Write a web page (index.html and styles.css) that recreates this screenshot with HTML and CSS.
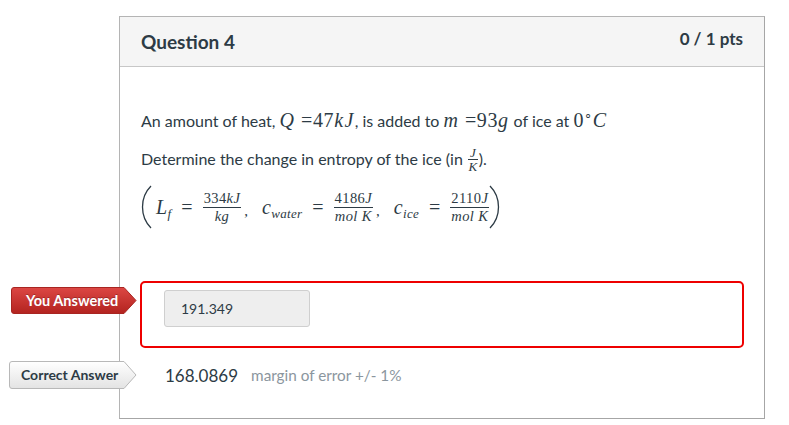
FILE: index.html
```html
<!DOCTYPE html>
<html>
<head>
<meta charset="utf-8">
<link rel="stylesheet" href="styles.css">
</head>
<body>
<div class="card">
  <div class="card-header">
    <div class="q-title">Question 4</div>
    <div class="q-pts">0 / 1 pts</div>
  </div>
  <div class="card-body">
    <p class="line l1">An amount of heat, <span class="m"><i>Q</i> <span class="rm">=47</span><i>kJ</i></span>, is added to <span class="m"><i>m</i> <span class="rm">=93</span><i>g</i></span> of ice at <span class="m"> <span class="rm">0</span><sup class="deg">∘</sup><i>C</i></span></p>
    <p class="line l2">Determine the change in entropy of the ice (in <span class="sfrac"><span class="num"><i>J</i></span><span class="den"><i>K</i></span></span>).</p>
    <div class="eq">
      <svg class="paren" width="11" height="44" viewBox="0 0 11 44"><path d="M10 1 C3 8 1.5 15 1.5 22 C1.5 29 3 36 10 43" fill="none" stroke="#2d3b45" stroke-width="1.3"/></svg>
      <span class="sym"><i>L</i><sub><i>f</i></sub></span>
      <span class="eqs">=</span>
      <span class="frac"><span class="num">334<i>kJ</i></span><span class="den"><i>kg</i></span></span>
      <span class="comma">,</span>
      <span class="sym c1"><i>c</i><sub><i>water</i></sub></span>
      <span class="eqs">=</span>
      <span class="frac"><span class="num">4186<i>J</i></span><span class="den"><i>mol</i>&nbsp;<i>K</i></span></span>
      <span class="comma">,</span>
      <span class="sym c2"><i>c</i><sub><i>ice</i></sub></span>
      <span class="eqs">=</span>
      <span class="frac"><span class="num">2110<i>J</i></span><span class="den"><i>mol</i>&nbsp;<i>K</i></span></span>
      <svg class="paren" width="11" height="44" viewBox="0 0 11 44"><path d="M1 1 C8 8 9.5 15 9.5 22 C9.5 29 8 36 1 43" fill="none" stroke="#2d3b45" stroke-width="1.3"/></svg>
    </div>
  </div>
  <div class="answer-row you">
    <div class="badge red">
      <svg class="badge-bg" width="126" height="27" viewBox="0 0 126 27">
        <defs><linearGradient id="rg" x1="0" y1="0" x2="0" y2="1"><stop offset="0" stop-color="#dc4744"/><stop offset="1" stop-color="#b3231f"/></linearGradient></defs>
        <path d="M3 0.5 H113 L125 13.5 L113 26.5 H3 Q0.5 26.5 0.5 24 V3 Q0.5 0.5 3 0.5 Z" fill="url(#rg)" stroke="#a82521" stroke-width="1"/>
      </svg>
      <span class="badge-text">You Answered</span>
    </div>
    <div class="answer-box">
      <div class="answer-input">191.349</div>
    </div>
  </div>
  <div class="answer-row correct">
    <div class="badge gray">
      <svg class="badge-bg" width="128" height="28" viewBox="0 0 128 28">
        <defs><linearGradient id="gg" x1="0" y1="0" x2="0" y2="1"><stop offset="0" stop-color="#ffffff"/><stop offset="1" stop-color="#e3e3e3"/></linearGradient></defs>
        <path d="M3 0.5 H115 L127 14 L115 27.5 H3 Q0.5 27.5 0.5 25 V3 Q0.5 0.5 3 0.5 Z" fill="url(#gg)" stroke="#b8b8b8" stroke-width="1"/>
      </svg>
      <span class="badge-text">Correct Answer</span>
    </div>
    <div class="correct-val">168.0869</div>
    <div class="margin">margin of error +/- 1%</div>
  </div>
</div>
</body>
</html>
```

FILE: styles.css
```css
html, body {
  margin: 0;
  padding: 0;
  background: #fff;
}
body {
  font-family: Lato, "Open Sans", sans-serif;
  color: #2d3b45;
}
.card {
  margin: 16px 0 0 119px;
  width: 646px;
  height: 403px;
  box-sizing: border-box;
  border: 1px solid #b4b4b4;
  border-bottom-color: #a6a6a6;
  border-right-color: #a6a6a6;
}
.card-header {
  height: 50px;
  box-sizing: border-box;
  background: #f5f5f5;
  border-bottom: 1px solid #c7c7c7;
  display: flex;
  justify-content: space-between;
  padding: 0 21px 0 21px;
}
.q-title {
  font-weight: 700;
  font-size: 19px;
  line-height: 20px;
  margin-top: 15px;
}
.q-pts {
  font-weight: 700;
  font-size: 17px;
  line-height: 18px;
  margin-top: 13px;
}
.card-body {
  padding: 42px 21px 0 21px;
  height: 165px;
  box-sizing: border-box;
}
.line {
  margin: 0;
  font-size: 16px;
}
.l1 {
  line-height: 22px;
}
.l2 {
  margin-top: 16px;
  line-height: 22px;
}
.m {
  font-family: "Liberation Serif", serif;
  font-size: 20px;
  letter-spacing: 0.6px;
}
.m i {
  font-style: italic;
  letter-spacing: 1.4px;
}
.rm {
  font-style: normal;
}
.deg {
  font-size: 13px;
  vertical-align: 8px;
  line-height: 0;
}
.sfrac {
  display: inline-flex;
  flex-direction: column;
  align-items: center;
  vertical-align: middle;
  font-family: "Liberation Serif", serif;
  font-size: 13px;
  line-height: 11px;
  margin: 0 1px;
  position: relative;
  top: -1px;
}
.sfrac .num {
  border-bottom: 1px solid #2d3b45;
  padding: 0 2px 1px;
}
.sfrac .den {
  padding-top: 1px;
}
.eq {
  display: flex;
  align-items: center;
  margin-top: 11px;
  font-family: "Liberation Serif", serif;
  font-size: 20px;
  height: 46px;
}
.paren {
  display: block;
}
.sym {
  margin-left: 4px;
  letter-spacing: 0.3px;
}
.sym sub {
  font-size: 13px;
  vertical-align: -4px;
  line-height: 0;
}
.eqs {
  margin: 0 10px;
  font-size: 20px;
}
.frac {
  display: inline-flex;
  flex-direction: column;
  align-items: center;
  font-size: 14.5px;
  line-height: 15px;
  letter-spacing: 0.4px;
}
.frac .num {
  border-bottom: 1px solid #2d3b45;
  padding: 0 1px 1px;
}
.frac .den {
  padding-top: 1px;
}
.comma {
  align-self: center;
  margin: 8px 10px 0 3px;
  font-size: 15px;
}
.answer-row {
  display: flex;
}
.you {
  margin-top: 49px;
}
.badge {
  position: relative;
  flex: none;
}
.badge-bg {
  position: absolute;
  left: 0;
  top: 0;
}
.badge-text {
  position: relative;
  display: block;
  font-weight: 700;
  line-height: 27px;
  white-space: nowrap;
}
.red {
  width: 126px;
  height: 27px;
  margin: 6px 0 0 -109px;
}
.red .badge-text {
  font-size: 14.5px;
  color: #fff;
  padding-left: 15px;
  text-shadow: 0 -1px 0 rgba(0,0,0,0.25);
}
.answer-box {
  margin-left: 3px;
  width: 604px;
  height: 67px;
  box-sizing: border-box;
  border: 2px solid #ee0000;
  border-radius: 5px;
  padding: 7px 0 0 22px;
}
.answer-input {
  width: 146px;
  height: 37px;
  box-sizing: border-box;
  background: #eeeeee;
  border: 1px solid #cfcfcf;
  border-radius: 3px;
  font-size: 14px;
  line-height: 35px;
  padding-left: 16px;
}
.correct {
  margin-top: 13px;
  align-items: center;
}
.gray {
  width: 128px;
  height: 28px;
  margin-left: -111px;
}
.gray .badge-text {
  font-size: 14px;
  color: #2d3b45;
  padding-left: 12px;
  line-height: 28px;
}
.correct-val {
  margin-left: 28px;
  font-size: 17px;
}
.margin {
  margin-left: 13px;
  font-size: 15.3px;
  color: #8b969e;
}
```
